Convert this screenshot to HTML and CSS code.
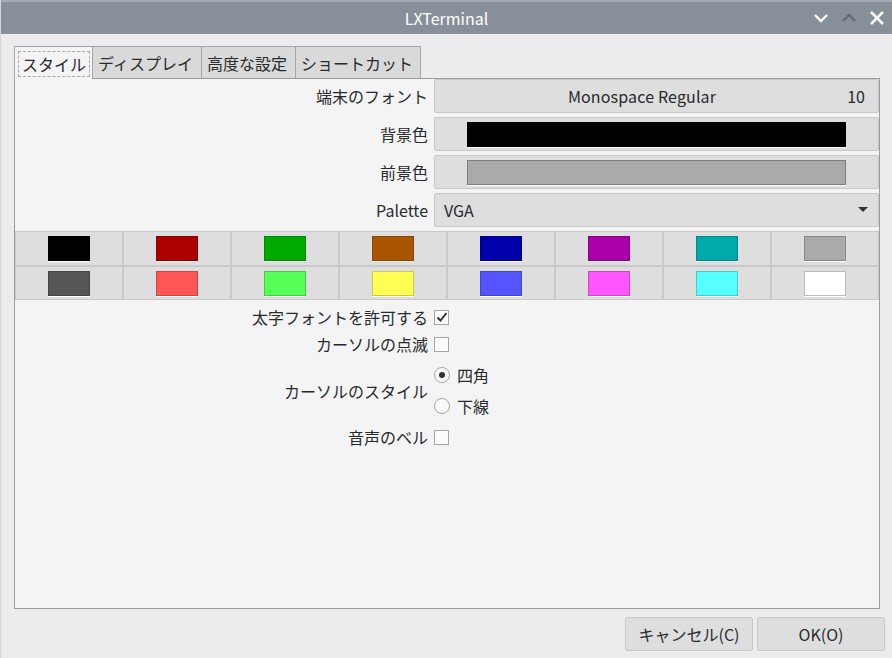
FILE: index.html
```html
<!DOCTYPE html>
<html lang="ja">
<head>
<meta charset="utf-8">
<title>LXTerminal</title>
<link rel="stylesheet" href="styles.css">
</head>
<body>
<div class="window">
  <div class="titlebar">
    <span class="title">LXTerminal</span>
    <div class="wm-buttons">
      <svg class="wm wm-min" width="16" height="12" viewBox="0 0 16 12"><path d="M2 3 L8 9 L14 3" fill="none" stroke="#ffffff" stroke-width="2.4"/></svg>
      <svg class="wm wm-max" width="16" height="12" viewBox="0 0 16 12"><path d="M2 9 L8 3 L14 9" fill="none" stroke="#646c75" stroke-width="2.4"/></svg>
      <svg class="wm wm-close" width="16" height="16" viewBox="0 0 16 16"><path d="M2 2 L14 14 M14 2 L2 14" fill="none" stroke="#ffffff" stroke-width="2.6"/></svg>
    </div>
  </div>

  <div class="content">
    <div class="notebook">
      <div class="tabs">
        <div class="tab active"><span class="focus">スタイル</span></div>
        <div class="tab">ディスプレイ</div>
        <div class="tab">高度な設定</div>
        <div class="tab">ショートカット</div>
      </div>
      <div class="page">
        <div class="form">
          <div class="label">端末のフォント</div>
          <div class="btn font-btn"><span class="font-name">Monospace Regular</span><span class="font-size">10</span></div>

          <div class="label">背景色</div>
          <div class="btn color-btn"><span class="color-bar bg-black"></span></div>

          <div class="label">前景色</div>
          <div class="btn color-btn"><span class="color-bar bg-gray"></span></div>

          <div class="label">Palette</div>
          <div class="btn combo"><span>VGA</span><svg width="10" height="6" viewBox="0 0 10 6"><path d="M0 0 L10 0 L5 5 Z" fill="#333"/></svg></div>
        </div>

        <div class="palette">
          <div class="cell"><span class="sw" style="background:#000000;border-color:#000000"></span></div>
          <div class="cell"><span class="sw" style="background:#aa0000;border-color:#880000"></span></div>
          <div class="cell"><span class="sw" style="background:#00aa00;border-color:#008800"></span></div>
          <div class="cell"><span class="sw" style="background:#aa5500;border-color:#884400"></span></div>
          <div class="cell"><span class="sw" style="background:#0000aa;border-color:#000088"></span></div>
          <div class="cell"><span class="sw" style="background:#aa00aa;border-color:#880088"></span></div>
          <div class="cell"><span class="sw" style="background:#00aaaa;border-color:#008888"></span></div>
          <div class="cell"><span class="sw" style="background:#aaaaaa;border-color:#888888"></span></div>
          <div class="cell"><span class="sw" style="background:#555555;border-color:#444444"></span></div>
          <div class="cell"><span class="sw" style="background:#ff5555;border-color:#cc4444"></span></div>
          <div class="cell"><span class="sw" style="background:#55ff55;border-color:#44cc44"></span></div>
          <div class="cell"><span class="sw" style="background:#ffff55;border-color:#cccc44"></span></div>
          <div class="cell"><span class="sw" style="background:#5555ff;border-color:#4444cc"></span></div>
          <div class="cell"><span class="sw" style="background:#ff55ff;border-color:#cc44cc"></span></div>
          <div class="cell"><span class="sw" style="background:#55ffff;border-color:#44cccc"></span></div>
          <div class="cell"><span class="sw" style="background:#ffffff;border-color:#bbbbbb"></span></div>
        </div>

        <div class="options">
          <div class="opt row1">
            <div class="olabel">太字フォントを許可する</div>
            <div class="ocontrol"><span class="check checked"><svg width="12" height="12" viewBox="0 0 12 12"><path d="M1.5 6.5 L4.5 9.5 L10.5 2" fill="none" stroke="#333" stroke-width="2"/></svg></span></div>
          </div>
          <div class="opt row2">
            <div class="olabel">カーソルの点滅</div>
            <div class="ocontrol"><span class="check"></span></div>
          </div>
          <div class="opt row3">
            <div class="olabel">カーソルのスタイル</div>
            <div class="ocontrol radios">
              <div class="radio-row"><span class="radio on"></span><span class="rtext">四角</span></div>
              <div class="radio-row"><span class="radio"></span><span class="rtext">下線</span></div>
            </div>
          </div>
          <div class="opt row4">
            <div class="olabel">音声のベル</div>
            <div class="ocontrol"><span class="check"></span></div>
          </div>
        </div>
      </div>
    </div>

    <div class="actions">
      <div class="btn action">キャンセル(C)</div>
      <div class="btn action">OK(O)</div>
    </div>
  </div>
</div>
</body>
</html>
```

FILE: styles.css
```css
html, body {
  margin: 0;
  padding: 0;
}
body {
  width: 892px;
  height: 658px;
  overflow: hidden;
  background: #ececec;
  font-family: "Noto Sans CJK JP", "Noto Sans", sans-serif;
  font-size: 16px;
  color: #262b2d;
}
.window {
  width: 892px;
  height: 658px;
  box-sizing: border-box;
  border-left: 1px solid #d4d4d4;
  display: flex;
  flex-direction: column;
}
.titlebar {
  height: 32px;
  border-top: 2px solid #a2a9b1;
  background: #878f99;
  position: relative;
  display: flex;
  align-items: center;
  justify-content: center;
}
.title {
  color: #ffffff;
  font-size: 16px;
}
.wm-buttons {
  position: absolute;
  right: 7px;
  top: 0;
  height: 32px;
  display: flex;
  align-items: center;
  gap: 12px;
}
.wm { display: block; }

.content {
  flex: 1;
  display: flex;
  flex-direction: column;
  padding: 12px 12px 0 13px;
}
.notebook {
  display: flex;
  flex-direction: column;
}
.tabs {
  display: flex;
  height: 32px;
  position: relative;
  z-index: 1;
}
.tab {
  box-sizing: border-box;
  height: 32px;
  padding: 0 5px;
  border: 1px solid #a5a5a5;
  border-left: none;
  border-bottom: none;
  background: #d9d9d9;
  display: flex;
  align-items: center;
  font-size: 16px;
  white-space: nowrap;
}
.tab.active {
  border-left: 1px solid #a5a5a5;
  background: #f4f4f4;
  height: 33px;
  padding: 0 3px;
  width: 79px;
}
.tab:nth-child(2) { width: 109px; }
.tab:nth-child(3) { width: 94px; }
.tab:nth-child(4) { width: 125px; }
.focus {
  border: 1px dashed #a8a8a8;
  padding: 0 3px;
  height: 24px;
  display: flex;
  align-items: center;
  margin-top: 1px;
}

.page {
  box-sizing: border-box;
  width: 866px;
  height: 531px;
  border: 1px solid #9b9b9b;
  background: #f4f4f4;
  display: flex;
  flex-direction: column;
}
.form {
  display: grid;
  grid-template-columns: 413px 1fr;
  column-gap: 6px;
  row-gap: 4px;
}
.label {
  text-align: right;
  display: flex;
  align-items: center;
  justify-content: flex-end;
  height: 34px;
}
.btn {
  box-sizing: border-box;
  height: 34px;
  background: #dedede;
  border: 1px solid #c8c8c8;
  border-radius: 2px;
  display: flex;
  align-items: center;
}
.font-btn {
  position: relative;
  justify-content: center;
  padding-right: 29px;
}
.font-name {
  letter-spacing: 0.15px;
}
.font-size {
  position: absolute;
  right: 13px;
}
.color-btn {
  padding: 0 32px;
}
.color-bar {
  flex: 1;
  height: 25px;
  box-sizing: border-box;
  box-shadow: 0 1px 0 #ffffff;
}
.bg-black { background: #000000; border: 1px solid #000000; }
.bg-gray { background: #aaaaaa; border: 1px solid #7d7d7d; }
.combo {
  justify-content: space-between;
  padding: 0 10px 0 9px;
}

.palette {
  margin-top: 4px;
  display: grid;
  grid-template-columns: repeat(8, 1fr);
}
.cell {
  box-sizing: border-box;
  height: 35px;
  border: 1px solid #c9c9c9;
  background: #dedede;
  display: flex;
  justify-content: center;
  padding-top: 4px;
}
.cell:nth-child(n+9) { height: 34px; }
.sw {
  box-sizing: border-box;
  width: 42px;
  height: 25px;
  border: 1px solid;
  box-shadow: 0 1px 0 #ffffff;
}

.options {
  display: flex;
  flex-direction: column;
  margin-top: 5px;
}
.opt {
  display: grid;
  grid-template-columns: 413px 1fr;
  column-gap: 6px;
  align-items: center;
}
.olabel {
  text-align: right;
}
.row1, .row2, .row4 { height: 22px; }
.row2 { margin-top: 5px; }
.row3 { margin-top: 10px; }
.row4 { margin-top: 8px; }
.ocontrol {
  display: flex;
  align-items: center;
}
.check {
  box-sizing: border-box;
  width: 15px;
  height: 15px;
  border: 1px solid #a5a5a5;
  background: #fbfbfb;
  display: flex;
  align-items: center;
  justify-content: center;
}
.check svg { display: block; }
.radios {
  flex-direction: column;
  align-items: flex-start;
  gap: 9px;
}
.radio-row {
  height: 22px;
  display: flex;
  align-items: center;
  gap: 7px;
}
.radio {
  box-sizing: border-box;
  width: 16px;
  height: 16px;
  border: 1px solid #a5a5a5;
  border-radius: 50%;
  background: #fbfbfb;
  display: flex;
  align-items: center;
  justify-content: center;
}
.radio.on::after {
  content: "";
  width: 6px;
  height: 6px;
  border-radius: 50%;
  background: #333;
}

.actions {
  display: flex;
  justify-content: flex-end;
  gap: 4px;
  margin-top: 8px;
  margin-right: -5px;
}
.action {
  width: 128px;
  justify-content: center;
}
```
